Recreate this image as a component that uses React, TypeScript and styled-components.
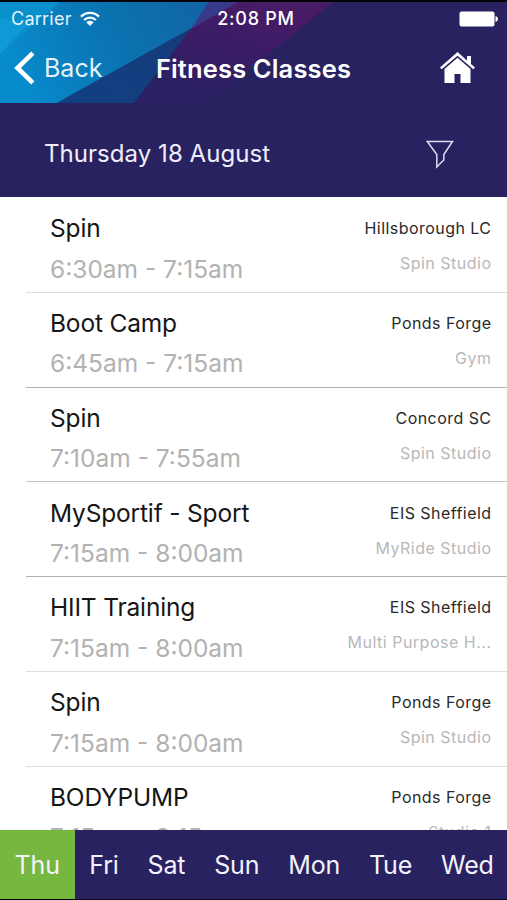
import React from "react";
import styled, { createGlobalStyle } from "styled-components";

const GlobalStyle = createGlobalStyle`
  * { box-sizing: border-box; }
  body { margin: 0; background: #fff; font-family: Inter, "Liberation Sans", sans-serif; }
`;

const Screen = styled.div`
  width: 507px;
  height: 900px;
  display: flex;
  flex-direction: column;
  overflow: hidden;
  background: #fff;
  border-top: 2px solid #02030b;
  border-bottom: 1px solid #05040f;
`;

const Header = styled.header`
  position: relative;
  flex: none;
  height: 101px;
  color: #fff;
  background: #292260;
`;

const HeaderArt = styled.svg`
  position: absolute;
  inset: 0;
  display: block;
`;

const StatusBar = styled.div`
  position: relative;
  display: grid;
  grid-template-columns: 1fr auto 1fr;
  align-items: center;
  height: 33px;
  padding: 0 9px 0 11px;
  font-size: 18px;
`;

const Carrier = styled.div`
  display: flex;
  align-items: center;
  gap: 8px;
  letter-spacing: 0.25px;
  color: #e4f3fb;
`;

const Clock = styled.div`
  padding-left: 3px;
  font-weight: 500;
  font-size: 18px;
  letter-spacing: 0.75px;
`;

const Battery = styled.svg`
  justify-self: end;
`;

const NavBar = styled.div`
  position: relative;
  display: grid;
  grid-template-columns: 1fr auto 1fr;
  align-items: center;
  height: 68px;
  padding: 0 14px 2px;
`;

const BackButton = styled.div`
  display: flex;
  align-items: center;
  gap: 9px;
  font-size: 25px;
  color: #e4f3fb;
`;

const Title = styled.h1`
  margin: 0;
  font-size: 25.5px;
  font-weight: 600;
  letter-spacing: 0.15px;
`;

const HomeIcon = styled.svg`
  justify-self: end;
  margin-right: 18px;
`;

const DateBar = styled.div`
  flex: none;
  display: flex;
  align-items: center;
  justify-content: space-between;
  height: 94px;
  padding: 9px 53px 0 44px;
  background: #292260;
  color: #f0eefb;
  font-size: 24px;
  letter-spacing: 0.05px;
`;

const DateLabel = styled.span`
  margin-top: -2px;
`;

const List = styled.main`
  flex: 1;
  min-height: 0;
  padding-top: 1px;
  overflow: hidden;
`;

const Row = styled.section<{ $line: string }>`
  display: flex;
  justify-content: space-between;
  height: 94.8px;
  margin-left: 26px;
  padding: 11.2px 15.5px 0 24px;
  border-bottom: 1.5px solid ${(p) => p.$line};
`;

const ClassInfo = styled.div`
  white-space: nowrap;
`;

const ClassName = styled.div`
  height: 39.5px;
  line-height: 39.5px;
  font-size: 24.5px;
  letter-spacing: -0.17px;
  color: #161616;
`;

const ClassTime = styled.div`
  height: 39.5px;
  line-height: 40px;
  font-size: 24.5px;
  color: #b2b2b2;
`;

const VenueInfo = styled.div`
  text-align: right;
  white-space: nowrap;
`;

const Venue = styled.div`
  height: 35px;
  line-height: 39px;
  font-size: 16px;
  letter-spacing: 0.45px;
  color: #2a2a2a;
`;

const Studio = styled.div`
  height: 35px;
  line-height: 39px;
  font-size: 16px;
  letter-spacing: 0.5px;
  color: #b8b8b8;
`;

const DayTabs = styled.nav`
  flex: none;
  display: flex;
  height: 69px;
  background: #292260;
`;

const DayTab = styled.div<{ $active?: boolean }>`
  display: flex;
  align-items: center;
  padding: 1px ${(p) => (p.$active ? 15 : 14.3)}px 0 14.5px;
  background: ${(p) => (p.$active ? "#76b740" : "transparent")};
  color: #f4f2fc;
  font-size: 25px;
  letter-spacing: -0.14px;
`;

const classes = [
  { name: "Spin", time: "6:30am - 7:15am", venue: "Hillsborough LC", studio: "Spin Studio", line: "#dcdcdc" },
  { name: "Boot Camp", time: "6:45am - 7:15am", venue: "Ponds Forge", studio: "Gym", line: "#b4b4b4" },
  { name: "Spin", time: "7:10am - 7:55am", venue: "Concord SC", studio: "Spin Studio", line: "#c4c4c4" },
  { name: "MySportif - Sport", time: "7:15am - 8:00am", venue: "EIS Sheffield", studio: "MyRide Studio", line: "#b4b4b4" },
  { name: "HIIT Training", time: "7:15am - 8:00am", venue: "EIS Sheffield", studio: "Multi Purpose H...", line: "#e0e0e0" },
  { name: "Spin", time: "7:15am - 8:00am", venue: "Ponds Forge", studio: "Spin Studio", line: "#dcdcdc" },
  { name: "BODYPUMP", time: "7:15am - 8:15am", venue: "Ponds Forge", studio: "Studio 1", line: "#dcdcdc" },
];

const days = ["Thu", "Fri", "Sat", "Sun", "Mon", "Tue", "Wed"];

export default function App() {
  return (
    <>
      <GlobalStyle />
      <Screen>
        <Header>
          <HeaderArt width="507" height="101" viewBox="0 2 507 101">
            <defs>
              <linearGradient id="sky" gradientUnits="userSpaceOnUse" x1="20" y1="90" x2="215" y2="5">
                <stop offset="0" stopColor="#078bcd" />
                <stop offset="0.5" stopColor="#0b73b1" />
                <stop offset="1" stopColor="#1263a2" />
              </linearGradient>
              <linearGradient id="plum" gradientUnits="userSpaceOnUse" x1="250" y1="2" x2="225" y2="100">
                <stop offset="0" stopColor="#481b66" />
                <stop offset="0.45" stopColor="#3b1c66" />
                <stop offset="1" stopColor="#2a2062" />
              </linearGradient>
              <linearGradient id="deep" x1="0" y1="1" x2="1" y2="0">
                <stop offset="0" stopColor="#123f82" />
                <stop offset="1" stopColor="#153c7a" />
              </linearGradient>
            </defs>
            <path d="M232 2H333L240 77L205 103H134L163 65L192 27Z" fill="url(#plum)" />
            <path d="M0 2H209L192 28L57 103H0Z" fill="url(#sky)" />
            <path d="M209 2H238L191 29Z" fill="#39398a" />
            <path d="M191 28.5L57 103H134L163 65Z" fill="url(#deep)" />
            <path d="M0 2H60L0 54Z" fill="#0a8fcd" />
            <path d="M0 18L27 25L0 54Z" fill="#109ad5" />
          </HeaderArt>
          <StatusBar>
            <Carrier>
              Carrier
              <svg width="20" height="16" viewBox="0 0 20 16" fill="none" stroke="#f5fbff" strokeWidth="2.3">
                <path d="M1 5.6C6.2 .5 13.8 .5 19 5.6M4.1 9C7.5 5.7 12.5 5.7 15.9 9" />
                <path d="M6.3 11.2C8.5 9.2 11.5 9.2 13.7 11.2L10 15Z" fill="#f5fbff" stroke="none" />
              </svg>
            </Carrier>
            <Clock>2:08 PM</Clock>
            <Battery width="39" height="16" viewBox="0 0 39 16">
              <rect x="0.5" y="0.5" width="35" height="15" rx="2" fill="#fff" />
              <path d="M36.5 5Q39 5.5 39 8T36.5 11Z" fill="#fff" />
            </Battery>
          </StatusBar>
          <NavBar>
            <BackButton>
              <svg width="21" height="34" viewBox="0 0 21 34" fill="none" stroke="#fff" strokeWidth="4.6">
                <path d="M18.8 2.2L3.5 17L18.8 31.8" />
              </svg>
              Back
            </BackButton>
            <Title>Fitness Classes</Title>
            <HomeIcon width="35" height="32" viewBox="0 0 35 32" fill="#fff">
              <path d="M17.5 0L27 8.4V4H31V12L35 15.5L33.3 17.3L17.5 3.7L1.7 17.3L0 15.5Z" />
              <path d="M17.5 5.8L30.5 17V31H20.5V22H14.5V31H4.5V17Z" />
            </HomeIcon>
          </NavBar>
        </Header>
        <DateBar>
          <DateLabel>Thursday 18 August</DateLabel>
          <svg width="28" height="29" viewBox="0 0 28 29" fill="none" stroke="#dfdcf2" strokeWidth="1.5">
            <path d="M1.3 1.5H26.5L17.8 14.5V20L10.8 27V14.5Z" />
          </svg>
        </DateBar>
        <List>
          {classes.map((c, i) => (
            <Row key={i} $line={c.line}>
              <ClassInfo>
                <ClassName>{c.name}</ClassName>
                <ClassTime>{c.time}</ClassTime>
              </ClassInfo>
              <VenueInfo>
                <Venue>{c.venue}</Venue>
                <Studio>{c.studio}</Studio>
              </VenueInfo>
            </Row>
          ))}
        </List>
        <DayTabs>
          {days.map((d) => (
            <DayTab key={d} $active={d === "Thu"}>{d}</DayTab>
          ))}
        </DayTabs>
      </Screen>
    </>
  );
}
